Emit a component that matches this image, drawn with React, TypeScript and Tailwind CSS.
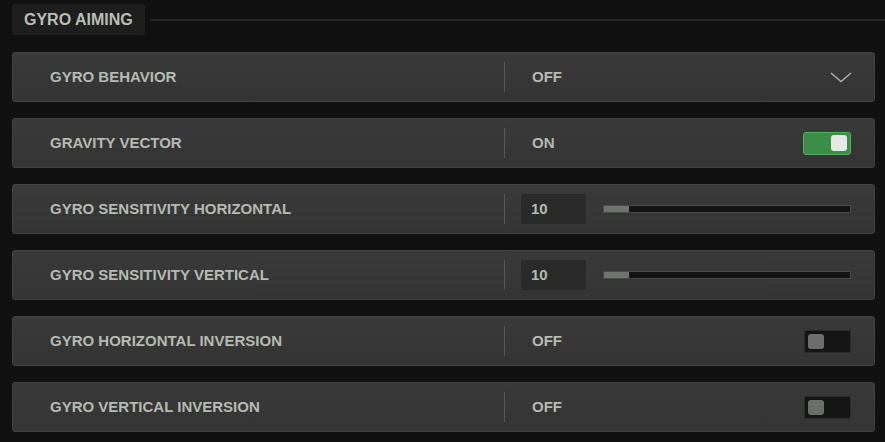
import React from 'react'

type Row =
    | { label: string; kind: 'select'; value: string }
    | { label: string; kind: 'toggle'; value: string; on: boolean }
    | { label: string; kind: 'slider'; value: number; pct: number }

const rows: Row[] = [
    { label: 'GYRO BEHAVIOR', kind: 'select', value: 'OFF' },
    { label: 'GRAVITY VECTOR', kind: 'toggle', value: 'ON', on: true },
    { label: 'GYRO SENSITIVITY HORIZONTAL', kind: 'slider', value: 10, pct: 10 },
    { label: 'GYRO SENSITIVITY VERTICAL', kind: 'slider', value: 10, pct: 10 },
    { label: 'GYRO HORIZONTAL INVERSION', kind: 'toggle', value: 'OFF', on: false },
    { label: 'GYRO VERTICAL INVERSION', kind: 'toggle', value: 'OFF', on: false },
]

function Toggle({ on }: { on: boolean }) {
    if (on) {
        return (
            <div className="w-[48px] h-[23px] rounded-[3px] bg-[#3a8f48] border border-[#52b05f] flex items-center justify-end pr-[3px]">
                <div className="w-[16px] h-[16px] rounded-[3px] bg-[#e6e8e6]" />
            </div>
        )
    }
    return (
        <div className="w-[47px] h-[23px] rounded-[2px] bg-[#151515] border border-[#2c2c2c] flex items-center pl-[3px]">
            <div className="w-[16px] h-[15px] rounded-[3px] bg-[#6c6e6b]" />
        </div>
    )
}

function Control({ row }: { row: Row }) {
    if (row.kind === 'select') {
        return (
            <div className="flex-1 flex items-center justify-between pl-[27px] pr-[22px]">
                <span>{row.value}</span>
                <svg width="22" height="11" viewBox="0 0 22 11" fill="none">
                    <path d="M1 1 L11 9.5 L21 1" stroke="#a9aca8" strokeWidth="1.6" />
                </svg>
            </div>
        )
    }
    if (row.kind === 'toggle') {
        return (
            <div className="flex-1 flex items-center justify-between pl-[27px] pr-[23px]">
                <span>{row.value}</span>
                <Toggle on={row.on} />
            </div>
        )
    }
    return (
        <div className="flex-1 flex items-center pl-[16px] pr-[23px]">
            <div className="w-[65px] h-[30px] bg-[#2a2a2a] rounded-[2px] flex items-center pl-[10px]">
                {row.value}
            </div>
            <div className="ml-[17px] flex-1 h-[8px] bg-[#141414] border border-[#4a4a4a] flex">
                <div className="h-full bg-[#6f746e]" style={{ width: `${row.pct}%` }} />
            </div>
        </div>
    )
}

export default function App() {
    return (
        <div
            className="w-[885px] h-[442px] bg-[#111111] overflow-hidden text-[#b5bab2]"
            style={{ fontFamily: '"Liberation Sans", Arial, sans-serif' }}
        >
            <div className="flex items-center pt-[4px] pl-[12px]">
                <div className="w-[133px] h-[31px] pl-[12px] bg-[#1e1e1e] rounded-[3px] flex items-center text-[16px] font-bold text-[#b9beb7]">
                    GYRO AIMING
                </div>
                <div className="flex-1 ml-[5px] h-[2px] bg-[#262626]" />
            </div>
            <div className="flex flex-col gap-[16px] pt-[17px] pl-[12px] pr-[10px]">
                {rows.map((row) => (
                    <div
                        key={row.label}
                        className="h-[50px] flex items-center rounded-[3px] border border-[#424242] bg-gradient-to-b from-[#3a3a3a] to-[#343434] text-[15px] font-bold"
                    >
                        <div className="w-[491px] pl-[37px]">{row.label}</div>
                        <div className="w-[1px] h-[30px] bg-[#575757]" />
                        <Control row={row} />
                    </div>
                ))}
            </div>
        </div>
    )
}
